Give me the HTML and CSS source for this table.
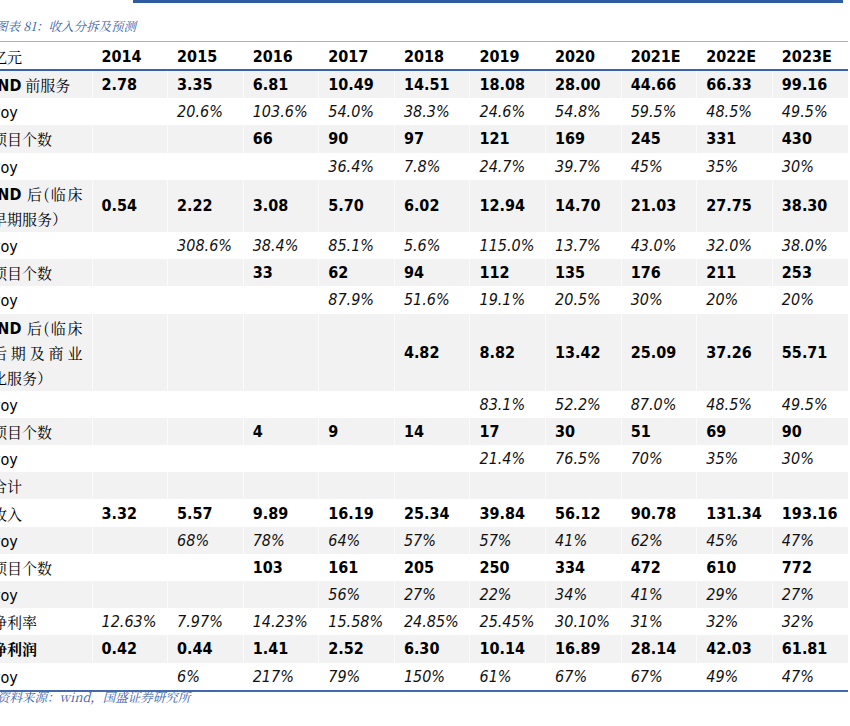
FILE: index.html
```html
<!DOCTYPE html>
<html lang="zh-CN">
<head>
<meta charset="utf-8">
<title>收入分拆及预测</title>
<link rel="stylesheet" href="styles.css">
</head>
<body>
<div class="page">
  <div class="topbar"></div>
  <div class="title">图表 81：收入分拆及预测</div>
  <table class="data">
    <colgroup><col class="c-label"><col class="c-num"><col class="c-num"><col class="c-num"><col class="c-num"><col class="c-num"><col class="c-num"><col class="c-num"><col class="c-num"><col class="c-num"><col class="c-num"></colgroup>
    <thead>
      <tr><th class="lbl">亿元</th><th>2014</th><th>2015</th><th>2016</th><th>2017</th><th>2018</th><th>2019</th><th>2020</th><th>2021E</th><th>2022E</th><th>2023E</th></tr>
    </thead>
    <tbody>
      <tr class="g b"><td class="lbl"><span class="en k">IND</span> 前服务</td><td>2.78</td><td>3.35</td><td>6.81</td><td>10.49</td><td>14.51</td><td>18.08</td><td>28.00</td><td>44.66</td><td>66.33</td><td>99.16</td></tr>
      <tr class="i"><td class="lbl"><span class="en">yoy</span></td><td></td><td>20.6%</td><td>103.6%</td><td>54.0%</td><td>38.3%</td><td>24.6%</td><td>54.8%</td><td>59.5%</td><td>48.5%</td><td>49.5%</td></tr>
      <tr class="g b"><td class="lbl">项目个数</td><td></td><td></td><td>66</td><td>90</td><td>97</td><td>121</td><td>169</td><td>245</td><td>331</td><td>430</td></tr>
      <tr class="i"><td class="lbl"><span class="en">yoy</span></td><td></td><td></td><td></td><td>36.4%</td><td>7.8%</td><td>24.7%</td><td>39.7%</td><td>45%</td><td>35%</td><td>30%</td></tr>
      <tr class="g b"><td class="lbl"><span class="ln j"><span class="en k">IND</span> 后(临床</span><span class="ln">早期服务）</span></td><td>0.54</td><td>2.22</td><td>3.08</td><td>5.70</td><td>6.02</td><td>12.94</td><td>14.70</td><td>21.03</td><td>27.75</td><td>38.30</td></tr>
      <tr class="i"><td class="lbl"><span class="en">yoy</span></td><td></td><td>308.6%</td><td>38.4%</td><td>85.1%</td><td>5.6%</td><td>115.0%</td><td>13.7%</td><td>43.0%</td><td>32.0%</td><td>38.0%</td></tr>
      <tr class="g b"><td class="lbl">项目个数</td><td></td><td></td><td>33</td><td>62</td><td>94</td><td>112</td><td>135</td><td>176</td><td>211</td><td>253</td></tr>
      <tr class="i"><td class="lbl"><span class="en">yoy</span></td><td></td><td></td><td></td><td>87.9%</td><td>51.6%</td><td>19.1%</td><td>20.5%</td><td>30%</td><td>20%</td><td>20%</td></tr>
      <tr class="g b"><td class="lbl"><span class="ln j"><span class="en k">IND</span> 后(临床</span><span class="ln j">后期及商业</span><span class="ln">化服务）</span></td><td></td><td></td><td></td><td></td><td>4.82</td><td>8.82</td><td>13.42</td><td>25.09</td><td>37.26</td><td>55.71</td></tr>
      <tr class="i"><td class="lbl"><span class="en">yoy</span></td><td></td><td></td><td></td><td></td><td></td><td>83.1%</td><td>52.2%</td><td>87.0%</td><td>48.5%</td><td>49.5%</td></tr>
      <tr class="g b"><td class="lbl">项目个数</td><td></td><td></td><td>4</td><td>9</td><td>14</td><td>17</td><td>30</td><td>51</td><td>69</td><td>90</td></tr>
      <tr class="i"><td class="lbl"><span class="en">yoy</span></td><td></td><td></td><td></td><td></td><td></td><td>21.4%</td><td>76.5%</td><td>70%</td><td>35%</td><td>30%</td></tr>
      <tr class="g"><td class="lbl">合计</td><td></td><td></td><td></td><td></td><td></td><td></td><td></td><td></td><td></td><td></td></tr>
      <tr class="b"><td class="lbl">收入</td><td>3.32</td><td>5.57</td><td>9.89</td><td>16.19</td><td>25.34</td><td>39.84</td><td>56.12</td><td>90.78</td><td>131.34</td><td>193.16</td></tr>
      <tr class="g i"><td class="lbl"><span class="en">yoy</span></td><td></td><td>68%</td><td>78%</td><td>64%</td><td>57%</td><td>57%</td><td>41%</td><td>62%</td><td>45%</td><td>47%</td></tr>
      <tr class="b"><td class="lbl">项目个数</td><td></td><td></td><td>103</td><td>161</td><td>205</td><td>250</td><td>334</td><td>472</td><td>610</td><td>772</td></tr>
      <tr class="g i"><td class="lbl"><span class="en">yoy</span></td><td></td><td></td><td></td><td>56%</td><td>27%</td><td>22%</td><td>34%</td><td>41%</td><td>29%</td><td>27%</td></tr>
      <tr class="i"><td class="lbl">净利率</td><td>12.63%</td><td>7.97%</td><td>14.23%</td><td>15.58%</td><td>24.85%</td><td>25.45%</td><td>30.10%</td><td>31%</td><td>32%</td><td>32%</td></tr>
      <tr class="g b"><td class="lbl strong">净利润</td><td>0.42</td><td>0.44</td><td>1.41</td><td>2.52</td><td>6.30</td><td>10.14</td><td>16.89</td><td>28.14</td><td>42.03</td><td>61.81</td></tr>
      <tr class="i last"><td class="lbl"><span class="en">yoy</span></td><td></td><td>6%</td><td>217%</td><td>79%</td><td>150%</td><td>61%</td><td>67%</td><td>67%</td><td>49%</td><td>47%</td></tr>
    </tbody>
  </table>
  <div class="source">资料来源：wind，国盛证券研究所</div>
</div>
</body>
</html>
```

FILE: styles.css
```css
html, body {
  margin: 0;
  padding: 0;
  background: #ffffff;
}

body {
  width: 850px;
  height: 726px;
  overflow: hidden;
}

.page {
  width: 850px;
  font-family: "DejaVu Sans Condensed", "DejaVu Sans", "Noto Sans CJK SC", sans-serif;
  color: #000;
}

.topbar {
  margin-left: 133px;
  width: 710px;
  height: 3px;
  background: #2f5ba3;
}

.title {
  height: 39px;
  line-height: 16px;
  padding-top: 15px;
  box-sizing: border-box;
  margin-left: -5px;
  font-family: "Noto Serif CJK SC", "Noto Sans CJK SC", serif;
  font-size: 12.5px;
  font-style: italic;
  color: #3b62ad;
  border-bottom: 1px solid #9fb3d6;
  width: 853px;
}

.data {
  margin-left: -10px;
  width: 858px;
  table-layout: fixed;
  border-collapse: collapse;
  border-spacing: 0;
}

.c-label { width: 102px; }
.c-num { width: 75.6px; }

.data th,
.data td {
  padding: 1.1px 0 1.1px 9px;
  line-height: 25px;
  font-size: 16px;
  text-align: left;
  vertical-align: middle;
  white-space: nowrap;
  border-left: 1px solid rgba(255, 255, 255, 0.7);
}

.data thead th {
  font-weight: bold;
  height: 25px;
  padding-top: 1.5px;
  padding-bottom: 0.5px;
  border-bottom: 2px solid #3a62a8;
}

.data .lbl {
  padding-left: 2px;
  padding-right: 9px;
  font-family: "Noto Serif CJK SC", "Noto Sans CJK SC", serif;
  font-weight: normal;
  font-style: normal;
  font-size: 15px;
  white-space: normal;
  border-left: none;
}

.data .lbl .en {
  font-family: "DejaVu Sans Condensed", "DejaVu Sans", sans-serif;
  font-size: 16px;
  line-height: 1;
  font-weight: normal;
}

.data .lbl .en.k {
  font-weight: bold;
}

.data .lbl .ln {
  display: block;
  height: 25px;
  white-space: nowrap;
}

.data .lbl .ln.j {
  text-align: justify;
  text-align-last: justify;
}

.data tr.g td,
.data tr.g th {
  background: #f2f2f2;
}

.data tr.b td {
  font-weight: bold;
}

.data tr.i td {
  font-style: italic;
  color: #111;
}

.data tr.i td.lbl,
.data tr.b td.lbl {
  font-style: normal;
  font-weight: normal;
  color: #000;
}

.data tr.b td.lbl.strong {
  font-weight: bold;
}

.data tr.last td {
  border-bottom: 2px solid #4369ad;
}

.source {
  margin-left: -3px;
  line-height: 10px;
  padding-top: 0;
  font-family: "Noto Serif CJK SC", "Noto Sans CJK SC", serif;
  font-size: 12.5px;
  font-style: italic;
  color: #3b62ad;
}
```
